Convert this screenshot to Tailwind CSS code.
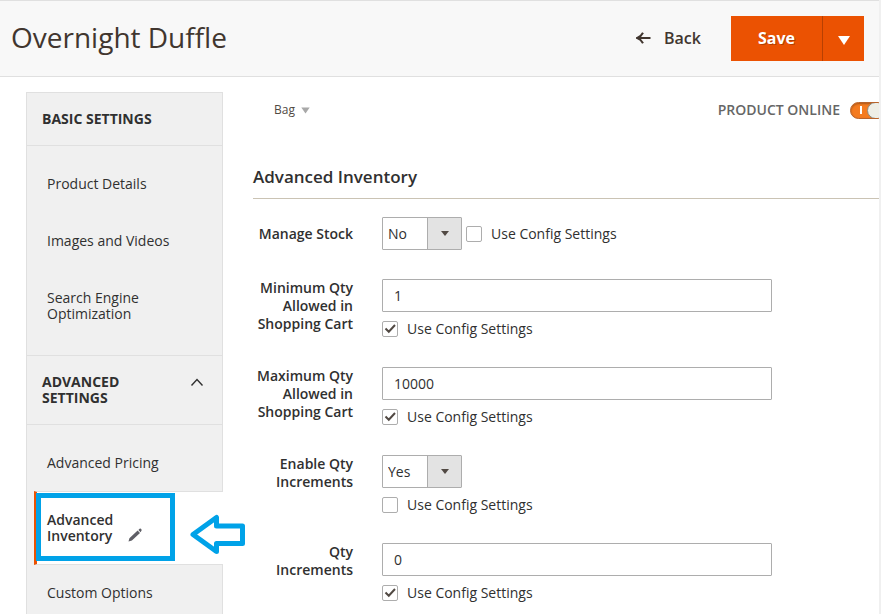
<!DOCTYPE html>
<html lang="en">
<head>
<meta charset="utf-8">
<meta name="viewport" content="width=device-width, initial-scale=1">
<title>Overnight Duffle</title>
<script src="https://cdn.jsdelivr.net/npm/@tailwindcss/browser@4"></script>
</head>
<body class="h-screen overflow-hidden border-r-2 border-[#f0f0f0] bg-white font-['Open_Sans',sans-serif] text-sm text-[#303030]">

<header class="flex items-center justify-between border-y border-[#e0e0e0] bg-[#f8f8f8] py-[15px] pr-[15px] pl-[11px]">
  <h1 class="pb-1 text-[28px] leading-9 font-normal text-[#41362f]">Overnight Duffle</h1>
  <div class="flex items-center">
    <button type="button" class="mr-[30px] flex items-center gap-[13px] pb-[2px] text-base leading-6 font-semibold text-[#41362f]">
      <svg class="h-3 w-[15px]" viewBox="0 0 15 12" fill="none" stroke="currentColor" stroke-width="2" aria-hidden="true"><path d="M14.5 6H2M7 .8C5.8 3.2 4 5 1.2 6C4 7 5.8 8.800 7 11.200"/></svg>
      Back
    </button>
    <div class="flex h-[45px] bg-[#eb5202] text-white">
      <button type="button" class="border-r border-[#b84002] px-[27px] pb-[2px] text-base font-bold [text-shadow:1px_1px_0_rgba(0,0,0,0.25)]">Save</button>
      <button type="button" aria-label="More save options" class="flex w-[41px] items-center justify-center pt-[3px]">
        <svg class="h-[9px] w-3" viewBox="0 0 12 9" aria-hidden="true"><path d="M0 0H12L6 9Z" fill="currentColor"/></svg>
      </button>
    </div>
  </div>
</header>

<div class="flex items-start pt-[15px]">
  <nav aria-label="Product settings" class="relative ml-[26px] w-[197px] shrink-0 border border-[#e0e0e0] bg-[#f0f0f0] leading-4">
    <h2 class="border-b border-[#e0e0e0] px-[15px] py-[18px] font-bold">BASIC SETTINGS</h2>
    <ul class="pt-[10px] pb-3">
      <li><a href="#details" class="block px-5 pt-5 pb-[21px]">Product Details</a></li>
      <li><a href="#media" class="block px-5 pt-5 pb-[21px]">Images and Videos</a></li>
      <li><a href="#seo" class="block px-5 pt-5 pb-[21px]">Search Engine<br>Optimization</a></li>
    </ul>
    <h2 class="border-y border-[#e0e0e0]">
      <button type="button" aria-expanded="true" class="flex w-full items-start justify-between py-[18px] pr-[18px] pl-[15px] text-left font-bold">
        <span>ADVANCED<br>SETTINGS</span>
        <svg class="mt-1 h-[9px] w-[14px]" viewBox="0 0 14 9" fill="none" stroke="currentColor" stroke-width="1.4" aria-hidden="true"><path d="M1.500 7.500L7 1.500L12.500 7.500"/></svg>
      </button>
    </h2>
    <ul class="pt-[10px]">
      <li><a href="#pricing" class="block px-5 py-5">Advanced Pricing</a></li>
      <li class="-mr-px ml-[7px]">
        <a href="#inventory" aria-current="page" class="flex items-end gap-[15px] border-y border-l-3 border-y-[#e0e0e0] border-l-[#eb5202] bg-white py-5 pl-[10px] font-semibold">
          <span>Advanced<br>Inventory</span>
          <svg class="mb-[2px] h-[14px] w-[14px]" viewBox="0 0 14 14" aria-hidden="true"><path d="M.5 13.500L1.400 10.200L9.600 2.600L12 5L3.900 12.600ZM10.400 1.900L11.600.7Q12.300.2 12.900.8L13.500 1.500Q13.900 2.200 13.400 2.800L12.600 4.200Z" fill="#5f5f66"/></svg>
        </a>
      </li>
      <li><a href="#options" class="block px-5 pt-5 pb-[21px]">Custom Options</a></li>
    </ul>
    <!-- Highlight box and pointer over the current section -->
    <div class="pointer-events-none absolute top-[400px] left-[9px] h-[68px] w-[139px] border-5 border-[#00a2e8]"></div>
    <svg class="pointer-events-none absolute top-[420px] left-[162px] h-[43px] w-[57px]" viewBox="0 0 57 43" fill="none" stroke="#00a2e8" stroke-width="5" stroke-linejoin="round" aria-hidden="true"><path d="M4 21.500L27.500 4.500V13H53.500V30.500H27.500V38.500Z"/></svg>
  </nav>

  <main class="min-w-0 flex-1 overflow-hidden pl-[30px]">
    <div class="flex items-center justify-between pt-[6px]">
      <button type="button" class="ml-[21px] flex items-center gap-[6px] text-xs leading-6 text-[#514943]">Bag
        <svg class="h-[7px] w-[9px]" viewBox="0 0 9 7" aria-hidden="true"><path d="M.3.500H8.700L4.500 6.500Z" fill="#a8a8a8"/></svg>
      </button>
      <label class="-mr-2 flex items-center gap-[10px] leading-6 font-semibold text-[#666]">PRODUCT ONLINE
        <input type="checkbox" role="switch" checked class="peer sr-only">
        <span class="flex h-[17px] w-[37px] items-center justify-between overflow-hidden rounded-full border border-[#b8642c] bg-[#f47b20] pl-[9px] shadow-[inset_0_1px_2px_rgba(0,0,0,0.3)]">
          <span class="h-2 w-[2px] bg-white"></span>
          <span class="h-[17px] w-[19px] shrink-0 rounded-full border border-[#8a8a80] bg-[#eeeee6]"></span>
        </span>
      </label>
    </div>

    <h2 class="mt-[43px] border-b border-[#cac3b4] pb-[9px] text-[17px] leading-6 font-semibold">Advanced Inventory</h2>

    <form class="mt-[18px] grid grid-cols-[100px_minmax(0,390px)] items-start gap-x-[29px]">
      <label for="manage" class="mb-[29px] pt-2 text-right leading-[18px] font-semibold">Manage Stock</label>
      <div class="mb-[29px] flex items-center gap-1">
        <div class="relative h-[33px] w-20">
          <select id="manage" class="h-full w-full appearance-none rounded-[1px] border border-[#adadad] bg-white pl-[5px]"><option>No</option><option>Yes</option></select>
          <span class="pointer-events-none absolute inset-y-px right-px flex w-[34px] items-center justify-center border-l border-[#adadad] bg-[#e3e3e3]"><svg class="h-[5px] w-2" viewBox="0 0 8 5" aria-hidden="true"><path d="M0 0H8L4 5Z" fill="#514943"/></svg></span>
        </div>
        <label class="mt-px flex items-center gap-[9px] leading-[18px]">
          <span class="relative h-4 w-4"><input type="checkbox" class="peer block h-4 w-4 appearance-none rounded-[2px] border border-[#adadad] bg-white"><svg class="pointer-events-none absolute inset-0 hidden h-4 w-4 peer-checked:block" viewBox="0 0 16 16" fill="none" stroke="#514943" stroke-width="2" aria-hidden="true"><path d="M3.500 7.500L6.800 10.700L13 4"/></svg></span>
          Use Config Settings</label>
      </div>

      <label for="minqty" class="text-right leading-[18px] font-semibold">Minimum Qty Allowed in Shopping Cart</label>
      <div class="mb-[29px]">
        <input id="minqty" type="text" value="1" class="block h-[33px] w-full rounded-[1px] border border-[#adadad] bg-white px-[11px]">
        <label class="mt-2 flex items-center gap-[9px] leading-[18px]">
          <span class="relative h-4 w-4"><input type="checkbox" checked class="peer block h-4 w-4 appearance-none rounded-[2px] border border-[#adadad] bg-white"><svg class="pointer-events-none absolute inset-0 hidden h-4 w-4 peer-checked:block" viewBox="0 0 16 16" fill="none" stroke="#514943" stroke-width="2" aria-hidden="true"><path d="M3.500 7.500L6.800 10.700L13 4"/></svg></span>
          Use Config Settings</label>
      </div>

      <label for="maxqty" class="text-right leading-[18px] font-semibold">Maximum Qty Allowed in Shopping Cart</label>
      <div class="mb-[29px]">
        <input id="maxqty" type="text" value="10000" class="block h-[33px] w-full rounded-[1px] border border-[#adadad] bg-white px-[11px]">
        <label class="mt-2 flex items-center gap-[9px] leading-[18px]">
          <span class="relative h-4 w-4"><input type="checkbox" checked class="peer block h-4 w-4 appearance-none rounded-[2px] border border-[#adadad] bg-white"><svg class="pointer-events-none absolute inset-0 hidden h-4 w-4 peer-checked:block" viewBox="0 0 16 16" fill="none" stroke="#514943" stroke-width="2" aria-hidden="true"><path d="M3.500 7.500L6.800 10.700L13 4"/></svg></span>
          Use Config Settings</label>
      </div>

      <label for="enable" class="text-right leading-[18px] font-semibold">Enable Qty Increments</label>
      <div class="mb-[29px]">
        <div class="relative h-[33px] w-20">
          <select id="enable" class="h-full w-full appearance-none rounded-[1px] border border-[#adadad] bg-white pl-[5px]"><option>Yes</option><option>No</option></select>
          <span class="pointer-events-none absolute inset-y-px right-px flex w-[34px] items-center justify-center border-l border-[#adadad] bg-[#e3e3e3]"><svg class="h-[5px] w-2" viewBox="0 0 8 5" aria-hidden="true"><path d="M0 0H8L4 5Z" fill="#514943"/></svg></span>
        </div>
        <label class="mt-2 flex items-center gap-[9px] leading-[18px]">
          <span class="relative h-4 w-4"><input type="checkbox" class="peer block h-4 w-4 appearance-none rounded-[2px] border border-[#adadad] bg-white"><svg class="pointer-events-none absolute inset-0 hidden h-4 w-4 peer-checked:block" viewBox="0 0 16 16" fill="none" stroke="#514943" stroke-width="2" aria-hidden="true"><path d="M3.500 7.500L6.800 10.700L13 4"/></svg></span>
          Use Config Settings</label>
      </div>

      <label for="increments" class="text-right leading-[18px] font-semibold">Qty<br>Increments</label>
      <div class="mb-[29px]">
        <input id="increments" type="text" value="0" class="block h-[33px] w-full rounded-[1px] border border-[#adadad] bg-white px-[11px]">
        <label class="mt-2 flex items-center gap-[9px] leading-[18px]">
          <span class="relative h-4 w-4"><input type="checkbox" checked class="peer block h-4 w-4 appearance-none rounded-[2px] border border-[#adadad] bg-white"><svg class="pointer-events-none absolute inset-0 hidden h-4 w-4 peer-checked:block" viewBox="0 0 16 16" fill="none" stroke="#514943" stroke-width="2" aria-hidden="true"><path d="M3.500 7.500L6.800 10.700L13 4"/></svg></span>
          Use Config Settings</label>
      </div>
    </form>
  </main>
</div>
</body>
</html>
